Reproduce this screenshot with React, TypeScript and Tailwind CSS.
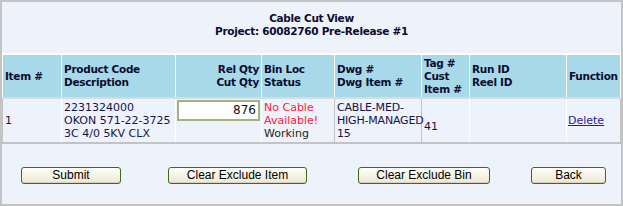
export default function App() {
  const th = "border-x border-white px-[2px] align-middle font-bold text-[#0c0c30] text-[10.5px] tracking-[-0.3px]";
  const tdGray = "border-x border-[#c3c3c3]";
  const tdWhite = "border-x border-white";
  const btn =
    "h-[17px] rounded-[3px] border border-[#3e6a1a] bg-gradient-to-b from-[#fffff7] to-[#ece8d6] text-[12px] leading-[15px] text-black font-['Liberation_Sans',Arial,sans-serif] shadow-[inset_0_-1px_0_#d8d2b8]";

  return (
    <div className="w-[623px] h-[206px] border-2 border-[#c4c4c4] bg-[#eef2fb] overflow-hidden font-['DejaVu_Sans',Verdana,sans-serif] text-[11px]">
      <div className="h-[51px] pt-[10px] text-center font-bold leading-[13px] text-[#0c0c30] text-[10.5px] tracking-[-0.3px]">
        <div>Cable Cut View</div>
        <div>Project: 60082760 Pre-Release #1</div>
      </div>
      <table className="w-full table-fixed border-collapse leading-[13px]">
        <colgroup>
          <col className="w-[59px]" />
          <col className="w-[114px]" />
          <col className="w-[86px]" />
          <col className="w-[73px]" />
          <col className="w-[87px]" />
          <col className="w-[48px]" />
          <col className="w-[97px]" />
          <col />
        </colgroup>
        <thead>
          <tr className="h-[44px] bg-[#a8d9e8] border-y-2 border-t-white border-b-[#d4dce6]">
            <th className={`${th} text-left`}>Item #</th>
            <th className={`${th} text-left`}>
              Product Code
              <br />
              Description
            </th>
            <th className={`${th} text-right`}>
              Rel Qty
              <br />
              Cut Qty
            </th>
            <th className={`${th} text-left border-l-[#9aa7ad]`}>
              Bin Loc
              <br />
              Status
            </th>
            <th className={`${th} text-left border-l-[#9aa7ad]`}>
              Dwg #
              <br />
              Dwg Item #
            </th>
            <th className={`${th} text-left`}>
              Tag #
              <br />
              Cust
              <br />
              Item #
            </th>
            <th className={`${th} text-left`}>
              Run ID
              <br />
              Reel ID
            </th>
            <th className={`${th} text-left whitespace-nowrap`}>Function</th>
          </tr>
        </thead>
        <tbody>
          <tr className="h-[45px] border-b-2 border-[#c3c3c3] text-[#14144a] align-middle">
            <td className={`${tdWhite} border-l-[#c3c3c3] px-[2px]`}>1</td>
            <td className={`${tdWhite} px-[2px]`}>
              2231324000
              <br />
              OKON 571-22-3725
              <br />
              3C 4/0 5KV CLX
            </td>
            <td className={`${tdWhite} px-[1px] align-top pt-[1px]`}>
              <div className="h-[21px] border-2 border-[#a5b27c] bg-white text-right pr-[2px] text-[12px] leading-[17px] text-[#111]">
                876
              </div>
            </td>
            <td className={`${tdGray} px-[2px]`}>
              <div className="text-[#ff1a40]">No Cable</div>
              <div className="text-[#ff1a40]">Available!</div>
              <div className="text-[#222]">Working</div>
            </td>
            <td className={`${tdGray} px-[2px] whitespace-nowrap tracking-[-0.2px]`}>
              CABLE-MED-
              <br />
              HIGH-MANAGED
              <br />
              15
            </td>
            <td className={`${tdGray} border-r-white px-[2px] pt-[11px]`}>41</td>
            <td className={`${tdWhite}`}></td>
            <td className={`${tdWhite} border-r-[#c3c3c3] pl-[1px]`}>
              <a href="#" className="text-[#2a1a9c] underline">
                Delete
              </a>
            </td>
          </tr>
        </tbody>
      </table>
      <div className="flex items-start pt-[23px]">
        <button className={`${btn} ml-[19px] w-[100px]`}>Submit</button>
        <button className={`${btn} ml-[47px] w-[139px]`}>Clear Exclude Item</button>
        <button className={`${btn} ml-[51px] w-[132px]`}>Clear Exclude Bin</button>
        <button className={`${btn} ml-[41px] w-[75px]`}>Back</button>
      </div>
    </div>
  );
}
